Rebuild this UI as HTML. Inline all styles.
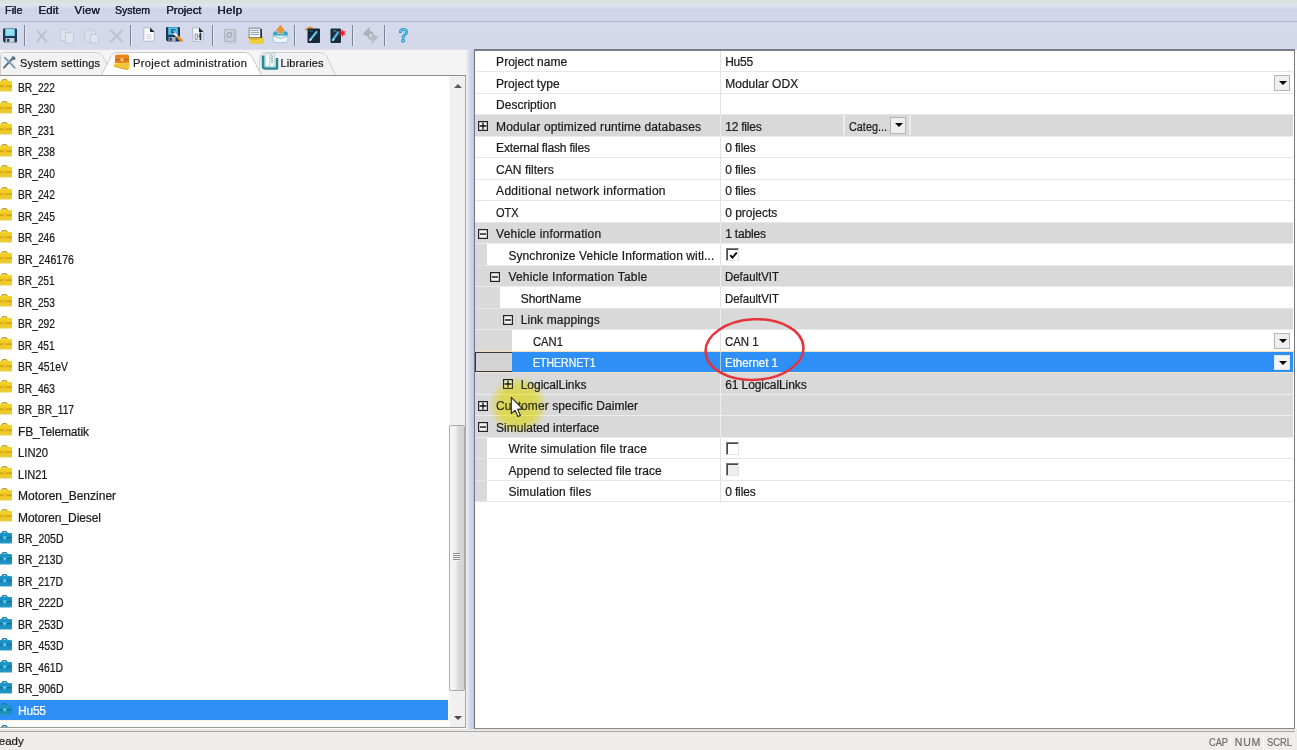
<!DOCTYPE html>
<html lang="en">
<head>
<meta charset="utf-8">
<title>Project administration</title>
<style>
*{box-sizing:border-box;margin:0;padding:0}
html,body{width:1297px;height:750px;overflow:hidden;background:#fff}
body{font-family:"Liberation Sans",sans-serif;font-size:12px;color:#1a1a1a;position:relative;-webkit-text-stroke:.22px}
i{font-style:normal;display:block}
#app{position:absolute;left:0;top:0;width:1297px;height:750px;overflow:hidden;background:#fff}
/* ---- menu + toolbar ---- */
.menubar{position:absolute;left:0;top:0;width:1297px;height:22px;background:linear-gradient(#dbdfde 0,#dfe3e5 4px,#dee3ef 5.5px,#d3d9ea 8px,#cfd5e8 10px,#d2d8ea 20.5px,#abb1c7 21px,#b9bfd3 22px)}
.mi{position:absolute;top:2px;line-height:16px;font-size:11.5px;color:#1d2236;white-space:nowrap;text-shadow:0 0 .6px #1d2236}
.toolbar{position:absolute;left:0;top:22px;width:1297px;height:28px;background:linear-gradient(#d4d9eb 0,#d3d8ea 24px,#d5d9ea 27.4px,#eceef4 28px)}
.toolbar svg{position:absolute}
.tsep{position:absolute;top:3px;width:2px;height:21px;background:linear-gradient(90deg,#7b8398 0,#7b8398 1px,#e6e9f3 1px)}
/* ---- left pane ---- */
.tabs{position:absolute;left:0;top:50px;width:466px;height:26px;background:#f4f4f5}
.tabs svg.shape{position:absolute;left:0;top:0}
.tab{position:absolute;top:3px;height:22px;line-height:22px;white-space:nowrap;font-size:11px}
.tab span{position:absolute;top:-1px;left:0}
.tree{position:absolute;left:0;top:75px;width:466px;height:653px;background:#fff;border-top:1px solid #8b8b8b;border-right:1px solid #a9a9a9;border-bottom:1px solid #9a9a9a;overflow:hidden}
.trow{position:absolute;left:0;width:448px;height:20px;margin-top:-76px;white-space:nowrap}
.trow .tico{position:absolute;left:0;top:4px}
.trow .tl{position:absolute;left:18px;top:0;line-height:21px;padding-top:1px}
.trow.sel{background:#2e90f7;color:#fff;box-shadow:0 0 0 1px #fcf1dc}
.vsb{position:absolute;left:449px;top:0;width:16px;height:651px;background:#f0f0f0;border-left:1px solid #f6f6f6}
.vsb .up,.vsb .dn{position:absolute;left:4px;width:0;height:0;border-left:4px solid transparent;border-right:4px solid transparent}
.vsb .up{top:7.5px;border-bottom:4.5px solid #5a5a5a}
.vsb .dn{top:640px;border-top:4px solid #4a4a4a}
.vsb .thumb{position:absolute;left:-1px;top:349px;width:16px;height:266px;border:1px solid #ababab;border-radius:2px;background:linear-gradient(90deg,#f7f7f7 0,#eeeeee 45%,#dadada 55%,#d2d2d2 100%)}
.vsb .grip{position:absolute;left:3px;top:127px;width:7px;height:8px;background:repeating-linear-gradient(#8a8a8a 0,#8a8a8a 1px,#f4f4f4 1px,#f4f4f4 2px)}
.split{position:absolute;left:466px;top:50px;width:8px;height:679px;background:linear-gradient(90deg,#eeeff3 0,#e6e8ef 25%,#d3d8e6 45%,#cdd2e3 80%,#b9c0d6 100%)}
/* ---- grid ---- */
.grid{position:absolute;left:474px;top:49px;width:821px;height:680px;background:#fff;border:1px solid #787878;border-left-color:#6f7690;border-top:2px solid #7a7e86;border-bottom:1px solid #8c8c8c;overflow:hidden}
.grow{position:absolute;left:0;width:818px;height:22px;margin-top:-51px;white-space:nowrap;border-bottom:1px solid #e6e6e6;background:#fff}
.grow.cat{background:#d9d9d9;border-bottom-color:#ebebeb}
.grow.sel{background:#2e90f7;color:#fff;border-bottom:1px solid #f3e3cf;box-shadow:0 0 0 1px #f8dcbc}
.grow .ind{position:absolute;left:0;top:0;bottom:0;background:#d9d9d9}
.grow .ind.foc{bottom:0;border:1px solid #3a3a3a;border-right:0;background:#d4d4d4}
.grow .exp{position:absolute;top:6px}
.grow .gl{position:absolute;top:0;line-height:21px;padding-top:1px}
.grow .gv{position:absolute;left:250.2px;top:0;line-height:21px;padding-top:1px}
.grow .cdiv{position:absolute;left:245px;top:0;width:1px;bottom:0;background:#e2e2e2}
.grow.cat .cdiv{background:#ededed}
.grow.sel .cdiv{background:#9cc9fb}
.grow .cdiv2{position:absolute;top:0;width:2px;bottom:1px;background:#ececec}
.chk{position:absolute;left:250.5px;top:4px;width:13px;height:13px;background:#fff;border:1px solid;border-color:#7a7a7a #e3e3e3 #e3e3e3 #7a7a7a;box-shadow:inset 1px 1px 0 #4a4a4a}
.chk svg{position:absolute;left:2px;top:2px}
.chk.dis{background:#eee}
.dd{position:absolute;right:3px;top:3px;width:16px;height:16px;background:#efefef;border:1px solid #b5b5b5}
.dd i{position:absolute;left:3.5px;top:5px;width:0;height:0;border-left:4px solid transparent;border-right:4px solid transparent;border-top:4px solid #000}
.dd.sm{top:2px;height:17px}
.grow.sel .dd{border-color:#dfe9f5;background:#f4f4f4;top:3px;height:15px}
/* overlays */
.ring{position:absolute;left:0;top:0;pointer-events:none}
/* ---- status ---- */
.status{position:absolute;left:0;top:729px;width:1297px;height:21px;background:#eeedec;border-top:1px solid #e4e2e0}
.status:before{content:"";position:absolute;left:0;top:1px;width:1295px;height:1px;background:#aaa6a3}
.status span{position:absolute;top:5px;line-height:14px;white-space:nowrap}
.status .ind{color:#6f6f6f;font-size:10.5px}
.status .sdiv{position:absolute;top:4px;width:1px;height:16px;background:#f9f8f7}
</style>
</head>
<body>
<svg width="0" height="0" style="position:absolute">
<defs>
<linearGradient id="gy" x1="0" y1="0" x2="0" y2="1"><stop offset="0" stop-color="#f3d62a"/><stop offset=".5" stop-color="#eec51a"/><stop offset="1" stop-color="#e9cf3c"/></linearGradient>
<linearGradient id="gb" x1="0" y1="0" x2="0" y2="1"><stop offset="0" stop-color="#1f9acb"/><stop offset=".5" stop-color="#1787b8"/><stop offset="1" stop-color="#2499c6"/></linearGradient>
<g id="icoY">
 <path d="M2 2.6 Q2 .6 4.5 .6 Q7 .6 7 2.6" fill="none" stroke="#c99a10" stroke-width="1.4"/>
 <path d="M-4 2 H11 Q12 2 12 3 V11.4 Q12 12.4 11 12.4 H-4Z" fill="url(#gy)"/>
 <rect x="-4" y="6.6" width="16" height="1.2" fill="#c79d06"/>
 <rect x="3" y="5.4" width="3.4" height="3.4" rx="1" fill="#f6b43a"/>
</g>
<g id="icoB">
 <path d="M2 2.6 Q2 .6 4.5 .6 Q7 .6 7 2.6" fill="none" stroke="#157aa6" stroke-width="1.4"/>
 <path d="M-4 2 H11 Q12 2 12 3 V11.4 Q12 12.4 11 12.4 H-4Z" fill="url(#gb)"/>
 <rect x="-4" y="6" width="16" height="1" fill="#13719c"/>
 <path d="M2.4 5.4 H7 L4.7 9Z" fill="#5fd0f6"/>
</g>
<g id="plus"><rect x=".6" y=".6" width="8.8" height="8.8" fill="#f4f4f4" stroke="#222" stroke-width="1.2"/><path d="M1.6 5H8.4M5 1.6V8.4" stroke="#111" stroke-width="1.3"/></g>
<g id="minus"><rect x=".6" y=".6" width="8.8" height="8.8" fill="#f4f4f4" stroke="#222" stroke-width="1.2"/><path d="M2 5H8" stroke="#111" stroke-width="1.4"/></g>
</defs>
</svg>
<div id="app">
 <div class="menubar"><span class="mi" style="left:4.6px;display:inline-block;transform-origin:0 50%;transform:scaleX(0.950);">File</span><span class="mi" style="left:38.6px;letter-spacing:-0.01px;">Edit</span><span class="mi" style="left:74.5px;letter-spacing:0.19px;">View</span><span class="mi" style="left:115.2px;display:inline-block;transform-origin:0 50%;transform:scaleX(0.913);">System</span><span class="mi" style="left:166.2px;letter-spacing:-0.07px;">Project</span><span class="mi" style="left:217.4px;letter-spacing:0.38px;">Help</span></div>
 <div class="toolbar">
  <svg style="left:2px;top:6px" width="16" height="15" viewBox="0 0 16 15"><path d="M1 1.5 Q1 .5 2 .5 H14 Q15 .5 15 1.5 V13.5 Q15 14.5 14 14.5 H2.5 L1 13Z" fill="#1c3a57"/><rect x="3.2" y=".8" width="9.6" height="7.2" fill="#7fd7ef"/><path d="M4.6 2.8H11.4M4.6 5.2H11.4" stroke="#c9f1fb" stroke-width=".9"/><rect x="3.6" y="10" width="8.8" height="4.5" fill="#c9ced6"/><rect x="5" y="10.8" width="2.4" height="3" fill="#2a3f57"/></svg>
  <i class="tsep" style="left:24px"></i>
  <svg style="left:35px;top:7px" width="14" height="14" viewBox="0 0 14 14" opacity=".45"><path d="M2.5 2 L10.5 11.5M11 2 L3 11.5" stroke="#9aa0ac" stroke-width="1.8" stroke-linecap="round"/><circle cx="3" cy="12" r="1.6" fill="#a9aeb9"/><circle cx="10.8" cy="12" r="1.6" fill="#a9aeb9"/></svg>
  <svg style="left:59px;top:5px" width="16" height="17" viewBox="0 0 16 17" opacity=".5"><path d="M1.5 2.5 H7 L9.5 5 V13.5 H1.5Z" fill="#e9ebf1" stroke="#b9bdc8"/><path d="M6.5 5.5 H12 L14.5 8 V16 H6.5Z" fill="#eef0f5" stroke="#b3b8c4"/></svg>
  <svg style="left:83px;top:4px" width="17" height="18" viewBox="0 0 17 18" opacity=".5"><path d="M1.5 4.5 H12.5 V15.5 H1.5Z" fill="#e3e5ec" stroke="#b9bdc8"/><rect x="5" y="2" width="4.5" height="3.5" fill="#cfd3dc"/><path d="M7.5 8.5 H13 L15.5 11 V17 H7.5Z" fill="#eef0f5" stroke="#b3b8c4"/></svg>
  <svg style="left:109px;top:7px" width="15" height="14" viewBox="0 0 15 14" opacity=".5"><path d="M2 1.5 L13 12.5M13 1.5 L2 12.5" stroke="#a9aeba" stroke-width="2.4" stroke-linecap="round"/></svg>
  <i class="tsep" style="left:130px"></i>
  <svg style="left:143px;top:5px" width="12" height="15" viewBox="0 0 12 15"><path d="M.8 .8 H7 L11.2 5 V14.2 H.8Z" fill="#fbfbfd" stroke="#aeb4c0" stroke-width=".9"/><path d="M7 .5 L11.5 5 H7Z" fill="#1f2533"/><path d="M3 7.5H9M3 9.5H9M3 11.5H9M5 7V12.5M7 7V12.5" stroke="#d6d9e2" stroke-width=".8"/></svg>
  <svg style="left:165px;top:4px" width="18" height="17" viewBox="0 0 18 17"><path d="M1 2 Q1 1 2 1 H14 Q15 1 15 2 V14.5 Q15 15.5 14 15.5 H2.5 L1 14Z" fill="#19395a"/><rect x="3.2" y="1.2" width="9.6" height="7.6" fill="#56c1e6"/><path d="M6 3.2H10.5V4.6H7.6V6H10V7.2H6Z" fill="#1b587c"/><rect x="3.6" y="11" width="7" height="4.5" fill="#a9b1bd"/><rect x="4.6" y="11.8" width="2.2" height="3" fill="#22384f"/><path d="M9 7 L15 13" stroke="#e9ecf0" stroke-width="2.4"/><path d="M13 11 L16.6 14.6" stroke="#f28a1c" stroke-width="2.6" stroke-linecap="round"/></svg>
  <svg style="left:192px;top:5px" width="12" height="15" viewBox="0 0 12 15"><path d="M.8 .8 H7 L11.2 5 V14.2 H.8Z" fill="#f6f7fb" stroke="#aab0bd" stroke-width=".9"/><path d="M7 .5 L11.5 5 H7Z" fill="#1f2533"/><path d="M3.2 7 V12.4 H5.4 V7Z" fill="none" stroke="#7e8796" stroke-width=".9"/><path d="M8.4 5.6 V13" stroke="#2a3142" stroke-width="1.8"/><path d="M6.6 10 L8.4 7.5" stroke="#2a3142" stroke-width="1"/></svg>
  <i class="tsep" style="left:212px"></i>
  <svg style="left:223px;top:6px" width="15" height="17" viewBox="0 0 15 17" opacity=".75"><path d="M1.5 1.5 H11.5 V13.5 H1.5Z" fill="#c9cdd4" stroke="#a3a8b2"/><rect x="12.2" y="1" width="1.3" height="14.5" fill="#b3b8c2"/><path d="M4.5 10 Q3.5 5 6.5 4.5 Q9 4.500 8.600 7 Q8 9 5.500 9.500" fill="none" stroke="#8f949e" stroke-width="1.2"/><rect x="2.5" y="14.6" width="11" height="1" fill="#c0c4cd"/></svg>
  <svg style="left:247px;top:5px" width="18" height="18" viewBox="0 0 18 18"><path d="M1 9 L3 15 Q3.4 16.6 5 16.6 H15 Q16.6 16.6 16.6 15 V10Z" fill="#e6b820"/><path d="M1 10.5 Q4 14 9 13 Q14 12 16.6 10 V15 Q16.600 16.600 15 16.600 H5 Q3.400 16.600 3 15Z" fill="#f3cf3e"/><path d="M2.2 1.2 H13.5 V10.600 H2.2Z" fill="#fdfdfd" stroke="#6f7887" stroke-width=".9"/><path d="M13.5 2 H15 V11 H13.5Z" fill="#2b3647"/><path d="M3.6 3.4H12M3.6 5.4H12M3.6 7.400H12" stroke="#8f99a8" stroke-width="1"/><path d="M6 2V9" stroke="#c5cad3" stroke-width=".8"/></svg>
  <svg style="left:272px;top:3px" width="17" height="19" viewBox="0 0 17 19"><path d="M8.400 .5 L12.400 5.500 H10.200 V8 H6.600 V5.500 H4.400Z" fill="#f0962c" stroke="#d77a14" stroke-width=".6"/><path d="M1 8.500 Q1 6.500 3 6.500 H5.500 V9 H11.300 V6.500 H13.800 Q15.800 6.500 15.800 8.500 V11 H1Z" fill="#36a9c9"/><path d="M1 10.500 H15.800 V15 Q15.800 17.600 13 17.600 H3.800 Q1 17.600 1 15Z" fill="#eef6fa" stroke="#8fc4d8" stroke-width=".8"/><path d="M1 10.800 L8.400 13.500 L15.800 10.800" fill="none" stroke="#7dbdd2" stroke-width=".9"/></svg>
  <i class="tsep" style="left:293.5px"></i>
  <svg style="left:304px;top:4px" width="17" height="18" viewBox="0 0 17 18"><path d="M1 4 L6 1.200 L9 3" fill="none" stroke="#f0902a" stroke-width="1.800"/><path d="M3.500 2.600 H15 Q16 2.600 16 3.600 V16 Q16 17 15 17 H4.500 Q3.500 17 3.500 16Z" fill="#16283a"/><path d="M6 14 L12.500 6" stroke="#58c3e2" stroke-width="2.200" stroke-linecap="round"/><path d="M5.400 15.200 L6.600 12.600 L8 13.800Z" fill="#d7eef6"/><path d="M5.500 5 H9" stroke="#4a6a85" stroke-width="1"/></svg>
  <svg style="left:329px;top:4px" width="18" height="18" viewBox="0 0 18 18"><path d="M1.500 3.600 Q1.500 2.600 2.500 2.600 H11 Q12 2.600 12 3.600 V16 Q12 17 11 17 H2.500 Q1.500 17 1.500 16Z" fill="#1b2e40"/><path d="M3.800 14 L9 6.500" stroke="#4fb4d6" stroke-width="2.200" stroke-linecap="round"/><path d="M3.200 15.200 L4.200 12.800 L5.600 13.800Z" fill="#d7eef6"/><path d="M4 5.400 Q6 4 7.500 5.600" stroke="#3f7fa0" stroke-width="1.200" fill="none"/><path d="M13.400 3.200 L14.300 5.600 L16.800 5.200 L15.200 7.200 L16.800 9.200 L14.300 8.800 L13.400 11.200 L12.500 8.800 L10 9.200 L11.600 7.200 L10 5.200 L12.500 5.600Z" fill="#e8202a"/></svg>
  <i class="tsep" style="left:351.5px"></i>
  <svg style="left:361px;top:4px" width="19" height="19" viewBox="0 0 19 19" opacity=".8"><path d="M1.500 8 L8.500 1 V5 Q12.500 5 13 9 Q10.500 7.600 8.500 8 V11.500Z" fill="#a3a6ad"/><path d="M17.500 11 L10.500 18 V14 Q6.500 14 6 10 Q8.500 11.400 10.500 11 V7.500Z" fill="#b2b5bc"/></svg>
  <i class="tsep" style="left:384px"></i>
  <svg style="left:397px;top:5px" width="13" height="17" viewBox="0 0 13 17"><path d="M2.500 5.500 Q2.500 1.500 6.500 1.500 Q10.500 1.500 10.500 5 Q10.500 7.200 8.500 8.200 Q7 9 7 11 H5.200 Q5 8.400 7 7.200 Q8.600 6.300 8.600 5 Q8.600 3.200 6.500 3.200 Q4.400 3.200 4.400 5.500Z" fill="#7fd3ee" stroke="#2b9fd0" stroke-width="1.100"/><circle cx="6.100" cy="13.800" r="1.500" fill="#7fd3ee" stroke="#2b9fd0" stroke-width="1.100"/></svg>
 </div>
 <div class="tabs">
  <svg class="shape" width="466" height="26" viewBox="0 0 466 26">
   <path d="M0.5 26 V5.5 Q0.5 2.5 3.5 2.5 H96 Q100.5 2.5 102.5 6 L113 26Z" fill="#f2f2f3" stroke="#cfcfd2"/>
   <path d="M257 26 L260 20 Q258 8 263 2.5 H320 Q324.5 2.5 326.5 6 L336 26Z" fill="#f2f2f3" stroke="#cfcfd2"/>
   <path d="M101 26 L111.5 5.5 Q113 2.5 117 2.5 H245 Q249.5 2.5 251.5 6 L262 26Z" fill="#fff" stroke="#c9c9cc"/>
  </svg>
  <div class="tab" style="left:3px">
   <svg width="16" height="15" viewBox="0 0 17 16" style="position:absolute;left:-1px;top:2px"><path d="M2 13.5 L11.5 3.5" stroke="#566d84" stroke-width="2.1" stroke-linecap="round"/><path d="M3 3 L13.5 13.5" stroke="#7d9fb8" stroke-width="2.1" stroke-linecap="round"/><path d="M10.5 1.5 Q14 1 14.5 4.5 L12.5 5.5 L10.5 3.5Z" fill="#566d84"/></svg>
   <span style="left:17px;letter-spacing:0.17px;">System settings</span>
  </div>
  <div class="tab" style="left:113px">
   <svg width="18" height="17" viewBox="0 0 18 17" style="position:absolute;left:0;top:1px"><path d="M2 2 Q2 .5 3.5 .5 H14 Q16 .5 16 2 V9 H2Z" fill="#e8841c"/><rect x="2" y="5" width="14" height="1.2" fill="#c86610"/><rect x="7.5" y="4.4" width="3" height="2.6" fill="#f7c98d"/><path d="M1 9.5 L16.5 8.5 V14 Q16.5 15.5 15 15.5 L9 14.5 L1 12Z" fill="#f2c53d"/><path d="M1 12 L9 14.5 L15 15.5" stroke="#d9a520" fill="none"/></svg>
   <span style="left:20px;letter-spacing:0.39px;">Project administration</span>
  </div>
  <div class="tab" style="left:260px">
   <svg width="18" height="18" viewBox="0 0 18 18" style="position:absolute;left:0.5px;top:0">
    <path d="M4.200 .8 H13.600 V14 H4.200Z" fill="#f3fafb" stroke="#a5cbd2" stroke-width=".8"/>
    <path d="M8.800 .8 V14" stroke="#9fc3cb" stroke-width=".8"/>
    <path d="M10.400 2.200 l1.200 1.100 l-1.200 1.100 l1.200 1.100 l-1.200 1.100 l1.200 1.100 l-1.200 1.100 l1.200 1.100" stroke="#5d6b74" fill="none" stroke-width=".8"/>
    <path d="M2 2.600 V13 Q2 15.600 4.600 15.600 H16 V5" fill="none" stroke="#2b8791" stroke-width="2.500" stroke-linejoin="round"/>
    <path d="M3.600 3 V12.600 Q3.600 14 5 14 H14.400" fill="none" stroke="#7fc4cc" stroke-width=".9"/>
   </svg>
   <span style="left:20.5px;letter-spacing:0.1px;">Libraries</span>
  </div>
 </div>
 <div class="tree">
<div class="trow" style="top:77px"><svg class="tico" style="top:2px" width="13" height="14" viewBox="0 0 13 14"><use href="#icoY"/></svg><span class="tl" style="display:inline-block;transform-origin:0 50%;transform:scaleX(0.853);">BR_222</span></div>
<div class="trow" style="top:98px"><svg class="tico" style="top:3px" width="13" height="14" viewBox="0 0 13 14"><use href="#icoY"/></svg><span class="tl" style="display:inline-block;transform-origin:0 50%;transform:scaleX(0.853);">BR_230</span></div>
<div class="trow" style="top:120px"><svg class="tico" style="top:2px" width="13" height="14" viewBox="0 0 13 14"><use href="#icoY"/></svg><span class="tl" style="display:inline-block;transform-origin:0 50%;transform:scaleX(0.842);">BR_231</span></div>
<div class="trow" style="top:141px"><svg class="tico" style="top:3px" width="13" height="14" viewBox="0 0 13 14"><use href="#icoY"/></svg><span class="tl" style="display:inline-block;transform-origin:0 50%;transform:scaleX(0.853);">BR_238</span></div>
<div class="trow" style="top:163px"><svg class="tico" style="top:2px" width="13" height="14" viewBox="0 0 13 14"><use href="#icoY"/></svg><span class="tl" style="display:inline-block;transform-origin:0 50%;transform:scaleX(0.853);">BR_240</span></div>
<div class="trow" style="top:184px"><svg class="tico" style="top:3px" width="13" height="14" viewBox="0 0 13 14"><use href="#icoY"/></svg><span class="tl" style="display:inline-block;transform-origin:0 50%;transform:scaleX(0.853);">BR_242</span></div>
<div class="trow" style="top:206px"><svg class="tico" style="top:2px" width="13" height="14" viewBox="0 0 13 14"><use href="#icoY"/></svg><span class="tl" style="display:inline-block;transform-origin:0 50%;transform:scaleX(0.853);">BR_245</span></div>
<div class="trow" style="top:227px"><svg class="tico" style="top:3px" width="13" height="14" viewBox="0 0 13 14"><use href="#icoY"/></svg><span class="tl" style="display:inline-block;transform-origin:0 50%;transform:scaleX(0.853);">BR_246</span></div>
<div class="trow" style="top:249px"><svg class="tico" style="top:2px" width="13" height="14" viewBox="0 0 13 14"><use href="#icoY"/></svg><span class="tl" style="display:inline-block;transform-origin:0 50%;transform:scaleX(0.883);">BR_246176</span></div>
<div class="trow" style="top:270px"><svg class="tico" style="top:3px" width="13" height="14" viewBox="0 0 13 14"><use href="#icoY"/></svg><span class="tl" style="display:inline-block;transform-origin:0 50%;transform:scaleX(0.842);">BR_251</span></div>
<div class="trow" style="top:292px"><svg class="tico" style="top:2px" width="13" height="14" viewBox="0 0 13 14"><use href="#icoY"/></svg><span class="tl" style="display:inline-block;transform-origin:0 50%;transform:scaleX(0.853);">BR_253</span></div>
<div class="trow" style="top:313px"><svg class="tico" style="top:3px" width="13" height="14" viewBox="0 0 13 14"><use href="#icoY"/></svg><span class="tl" style="display:inline-block;transform-origin:0 50%;transform:scaleX(0.853);">BR_292</span></div>
<div class="trow" style="top:335px"><svg class="tico" style="top:2px" width="13" height="14" viewBox="0 0 13 14"><use href="#icoY"/></svg><span class="tl" style="display:inline-block;transform-origin:0 50%;transform:scaleX(0.842);">BR_451</span></div>
<div class="trow" style="top:356px"><svg class="tico" style="top:3px" width="13" height="14" viewBox="0 0 13 14"><use href="#icoY"/></svg><span class="tl" style="display:inline-block;transform-origin:0 50%;transform:scaleX(0.861);">BR_451eV</span></div>
<div class="trow" style="top:378px"><svg class="tico" style="top:2px" width="13" height="14" viewBox="0 0 13 14"><use href="#icoY"/></svg><span class="tl" style="display:inline-block;transform-origin:0 50%;transform:scaleX(0.853);">BR_463</span></div>
<div class="trow" style="top:399px"><svg class="tico" style="top:3px" width="13" height="14" viewBox="0 0 13 14"><use href="#icoY"/></svg><span class="tl" style="display:inline-block;transform-origin:0 50%;transform:scaleX(0.851);">BR_BR_117</span></div>
<div class="trow" style="top:421px"><svg class="tico" style="top:2px" width="13" height="14" viewBox="0 0 13 14"><use href="#icoY"/></svg><span class="tl" style="letter-spacing:-0.15px;">FB_Telematik</span></div>
<div class="trow" style="top:442px"><svg class="tico" style="top:3px" width="13" height="14" viewBox="0 0 13 14"><use href="#icoY"/></svg><span class="tl" style="display:inline-block;transform-origin:0 50%;transform:scaleX(0.937);">LIN20</span></div>
<div class="trow" style="top:464px"><svg class="tico" style="top:2px" width="13" height="14" viewBox="0 0 13 14"><use href="#icoY"/></svg><span class="tl" style="display:inline-block;transform-origin:0 50%;transform:scaleX(0.921);">LIN21</span></div>
<div class="trow" style="top:485px"><svg class="tico" style="top:3px" width="13" height="14" viewBox="0 0 13 14"><use href="#icoY"/></svg><span class="tl" style="letter-spacing:-0.0px;">Motoren_Benziner</span></div>
<div class="trow" style="top:507px"><svg class="tico" style="top:2px" width="13" height="14" viewBox="0 0 13 14"><use href="#icoY"/></svg><span class="tl" style="letter-spacing:-0.08px;">Motoren_Diesel</span></div>
<div class="trow" style="top:528px"><svg class="tico" style="top:3px" width="13" height="14" viewBox="0 0 13 14"><use href="#icoB"/></svg><span class="tl" style="display:inline-block;transform-origin:0 50%;transform:scaleX(0.874);">BR_205D</span></div>
<div class="trow" style="top:550px"><svg class="tico" style="top:2px" width="13" height="14" viewBox="0 0 13 14"><use href="#icoB"/></svg><span class="tl" style="display:inline-block;transform-origin:0 50%;transform:scaleX(0.865);margin-top:-1px;">BR_213D</span></div>
<div class="trow" style="top:571px"><svg class="tico" style="top:3px" width="13" height="14" viewBox="0 0 13 14"><use href="#icoB"/></svg><span class="tl" style="display:inline-block;transform-origin:0 50%;transform:scaleX(0.865);">BR_217D</span></div>
<div class="trow" style="top:593px"><svg class="tico" style="top:2px" width="13" height="14" viewBox="0 0 13 14"><use href="#icoB"/></svg><span class="tl" style="display:inline-block;transform-origin:0 50%;transform:scaleX(0.874);margin-top:-1px;">BR_222D</span></div>
<div class="trow" style="top:614px"><svg class="tico" style="top:3px" width="13" height="14" viewBox="0 0 13 14"><use href="#icoB"/></svg><span class="tl" style="display:inline-block;transform-origin:0 50%;transform:scaleX(0.874);">BR_253D</span></div>
<div class="trow" style="top:636px"><svg class="tico" style="top:2px" width="13" height="14" viewBox="0 0 13 14"><use href="#icoB"/></svg><span class="tl" style="display:inline-block;transform-origin:0 50%;transform:scaleX(0.874);margin-top:-1px;">BR_453D</span></div>
<div class="trow" style="top:657px"><svg class="tico" style="top:3px" width="13" height="14" viewBox="0 0 13 14"><use href="#icoB"/></svg><span class="tl" style="display:inline-block;transform-origin:0 50%;transform:scaleX(0.865);">BR_461D</span></div>
<div class="trow" style="top:679px"><svg class="tico" style="top:2px" width="13" height="14" viewBox="0 0 13 14"><use href="#icoB"/></svg><span class="tl" style="display:inline-block;transform-origin:0 50%;transform:scaleX(0.874);margin-top:-1px;">BR_906D</span></div>
<div class="trow sel" style="top:700px"><svg class="tico" style="top:3px" width="13" height="14" viewBox="0 0 13 14"><use href="#icoB"/></svg><span class="tl" style="letter-spacing:-0.23px;">Hu55</span></div>
<div class="trow" style="top:722px"><svg class="tico" style="top:3px" width="13" height="14" viewBox="0 0 13 14"><use href="#icoB"/></svg></div>
  <div class="vsb"><i class="up"></i><div class="thumb"><i class="grip"></i></div><i class="dn"></i></div>
 </div>
 <div class="split"></div>
 <div class="grid">
<div class="grow" style="top:51px;height:21px"><span class="gl" style="left:21.1px;letter-spacing:0.03px;">Project name</span><i class="cdiv"></i><span class="gv" style="letter-spacing:-0.23px;">Hu55</span></div>
<div class="grow" style="top:72px;height:22px"><span class="gl" style="left:21.1px;margin-top:1px;letter-spacing:0.01px;">Project type</span><i class="cdiv"></i><span class="gv" style="margin-top:1px;letter-spacing:0.03px;">Modular ODX</span><span class="dd"><i></i></span></div>
<div class="grow" style="top:94px;height:21px"><span class="gl" style="left:21.1px;letter-spacing:-0.0px;">Description</span><i class="cdiv"></i></div>
<div class="grow cat" style="top:115px;height:22px"><svg class="exp" style="left:3.1px" width="10" height="10" viewBox="0 0 10 10"><use href="#plus"/></svg><span class="gl" style="left:21.1px;margin-top:1px;letter-spacing:0.14px;">Modular optimized runtime databases</span><i class="cdiv"></i><span class="gv" style="margin-top:1px;letter-spacing:-0.22px;">12 files</span><i class="cdiv2" style="left:367.5px"></i><span class="gv" style="left:373.5px;margin-top:1px;display:inline-block;transform-origin:0 50%;transform:scaleX(0.904);">Categ...</span><span class="dd sm" style="left:415px;right:auto"><i></i></span><i class="cdiv2" style="left:434px"></i></div>
<div class="grow" style="top:137px;height:21px"><span class="gl" style="left:21.1px;letter-spacing:-0.18px;">External flash files</span><i class="cdiv"></i><span class="gv" style="letter-spacing:-0.14px;">0 files</span></div>
<div class="grow" style="top:158px;height:22px"><span class="gl" style="left:21.1px;margin-top:1px;letter-spacing:0.03px;">CAN filters</span><i class="cdiv"></i><span class="gv" style="margin-top:1px;letter-spacing:-0.14px;">0 files</span></div>
<div class="grow" style="top:180px;height:21px"><span class="gl" style="left:21.1px;letter-spacing:0.3px;">Additional network information</span><i class="cdiv"></i><span class="gv" style="letter-spacing:-0.14px;">0 files</span></div>
<div class="grow" style="top:201px;height:22px"><span class="gl" style="left:21.1px;margin-top:1px;display:inline-block;transform-origin:0 50%;transform:scaleX(0.920);">OTX</span><i class="cdiv"></i><span class="gv" style="margin-top:1px;letter-spacing:-0.0px;">0 projects</span></div>
<div class="grow cat" style="top:223px;height:21px"><svg class="exp" style="left:3.1px" width="10" height="10" viewBox="0 0 10 10"><use href="#minus"/></svg><span class="gl" style="left:21.1px;letter-spacing:0.2px;">Vehicle information</span><i class="cdiv"></i><span class="gv" style="letter-spacing:-0.19px;">1 tables</span></div>
<div class="grow" style="top:244px;height:22px"><i class="ind" style="width:12.3px"></i><span class="gl" style="left:33.4px;margin-top:1px;letter-spacing:0.1px;">Synchronize Vehicle Information witl...</span><i class="cdiv"></i><span class="chk"><svg width="9" height="9" viewBox="0 0 9 9"><path d="M1.2 4.2 L3.4 6.6 L7.8 1.6" fill="none" stroke="#000" stroke-width="1.9"/></svg></span></div>
<div class="grow cat" style="top:266px;height:21px"><svg class="exp" style="left:15.4px" width="10" height="10" viewBox="0 0 10 10"><use href="#minus"/></svg><span class="gl" style="left:33.4px;letter-spacing:0.21px;">Vehicle Information Table</span><i class="cdiv"></i><span class="gv" style="display:inline-block;transform-origin:0 50%;transform:scaleX(0.953);">DefaultVIT</span></div>
<div class="grow" style="top:287px;height:22px"><i class="ind" style="width:24.6px"></i><span class="gl" style="left:45.7px;margin-top:1px;letter-spacing:0.0px;">ShortName</span><i class="cdiv"></i><span class="gv" style="margin-top:1px;display:inline-block;transform-origin:0 50%;transform:scaleX(0.953);">DefaultVIT</span></div>
<div class="grow cat" style="top:309px;height:21px"><svg class="exp" style="left:27.7px" width="10" height="10" viewBox="0 0 10 10"><use href="#minus"/></svg><span class="gl" style="left:45.7px;letter-spacing:0.14px;">Link mappings</span><i class="cdiv"></i></div>
<div class="grow" style="top:330px;height:22px"><i class="ind" style="width:36.9px"></i><span class="gl" style="left:58.0px;margin-top:1px;display:inline-block;transform-origin:0 50%;transform:scaleX(0.937);">CAN1</span><i class="cdiv"></i><span class="gv" style="margin-top:1px;display:inline-block;transform-origin:0 50%;transform:scaleX(0.951);">CAN 1</span><span class="dd"><i></i></span></div>
<div class="grow sel" style="top:352px;height:21px"><i class="ind foc" style="width:36.9px"></i><span class="gl" style="left:58.0px;display:inline-block;transform-origin:0 50%;transform:scaleX(0.876);">ETHERNET1</span><i class="cdiv"></i><span class="gv" style="display:inline-block;transform-origin:0 50%;transform:scaleX(0.957);">Ethernet 1</span><span class="dd"><i></i></span></div>
<div class="grow cat" style="top:373px;height:22px"><svg class="exp" style="left:27.7px" width="10" height="10" viewBox="0 0 10 10"><use href="#plus"/></svg><span class="gl" style="left:45.7px;margin-top:1px;letter-spacing:-0.02px;">LogicalLinks</span><i class="cdiv"></i><span class="gv" style="margin-top:1px;letter-spacing:-0.09px;">61 LogicalLinks</span></div>
<div class="grow cat" style="top:395px;height:21px"><svg class="exp" style="left:3.1px" width="10" height="10" viewBox="0 0 10 10"><use href="#plus"/></svg><span class="gl" style="left:21.1px;letter-spacing:0.08px;">Customer specific Daimler</span><i class="cdiv"></i></div>
<div class="grow cat" style="top:416px;height:22px"><svg class="exp" style="left:3.1px" width="10" height="10" viewBox="0 0 10 10"><use href="#minus"/></svg><span class="gl" style="left:21.1px;margin-top:1px;letter-spacing:0.02px;">Simulated interface</span><i class="cdiv"></i></div>
<div class="grow" style="top:438px;height:21px"><i class="ind" style="width:12.3px"></i><span class="gl" style="left:33.4px;letter-spacing:0.18px;">Write simulation file trace</span><i class="cdiv"></i><span class="chk"></span></div>
<div class="grow" style="top:459px;height:22px"><i class="ind" style="width:12.3px"></i><span class="gl" style="left:33.4px;margin-top:1px;letter-spacing:0.07px;">Append to selected file trace</span><i class="cdiv"></i><span class="chk dis"></span></div>
<div class="grow" style="top:481px;height:21px"><i class="ind" style="width:12.3px"></i><span class="gl" style="left:33.4px;letter-spacing:0.15px;">Simulation files</span><i class="cdiv"></i><span class="gv" style="letter-spacing:-0.14px;">0 files</span></div>
 </div>
<svg class="ring" width="1297" height="750" viewBox="0 0 1297 750">
  <defs><radialGradient id="spot"><stop offset="0" stop-color="#fffb62" stop-opacity="1"/><stop offset=".62" stop-color="#fffa68" stop-opacity=".92"/><stop offset=".86" stop-color="#fffa78" stop-opacity=".45"/><stop offset="1" stop-color="#fffb90" stop-opacity="0"/></radialGradient></defs>
  <circle cx="518" cy="405.5" r="29.5" fill="url(#spot)" style="mix-blend-mode:multiply"/>
  <circle cx="518" cy="405.5" r="24" fill="#f4ea30" fill-opacity=".1"/>
  <ellipse cx="754.5" cy="349.6" rx="49" ry="30.300" fill="none" stroke="#e5343c" stroke-width="2.500" transform="rotate(-3 754.500 349.600)"/>
  <path d="M511.300 397.300 V413.600 L515 410.300 L517.900 416.600 L520.400 415.400 L517.600 409.300 L522.600 408.900Z" fill="#fff" stroke="#2a2410" stroke-width="1.100" stroke-linejoin="round"/>
 </svg>
 <div class="status"><span style="left:-9.5px;top:4px;font-size:11.5px">Ready</span><i class="sdiv" style="left:1230px"></i><i class="sdiv" style="left:1263px"></i><span class="ind" style="left:1208.6px;display:inline-block;transform-origin:0 50%;transform:scaleX(0.880);">CAP</span><span class="ind" style="left:1234.8px;letter-spacing:0.79px;">NUM</span><span class="ind" style="left:1267.2px;display:inline-block;transform-origin:0 50%;transform:scaleX(0.893);">SCRL</span></div>
</div>
</body>
</html>
